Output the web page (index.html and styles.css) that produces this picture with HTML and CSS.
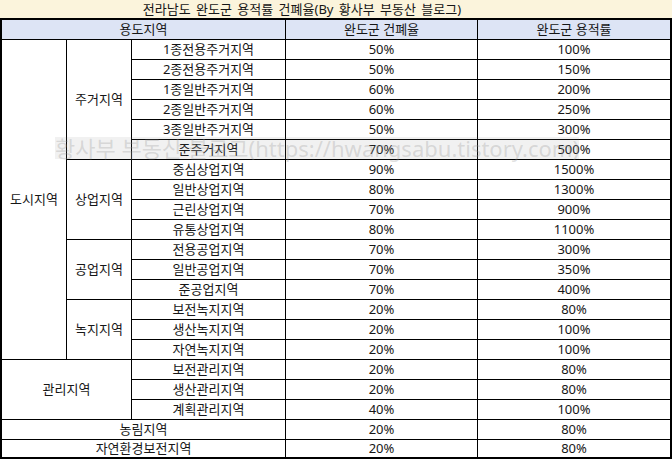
FILE: index.html
```html
<!DOCTYPE html>
<html lang="ko">
<head>
<meta charset="utf-8">
<title>전라남도 완도군 용적률 건폐율</title>
<link rel="stylesheet" href="styles.css">
</head>
<body>
<div class="page">
  <div class="title">전라남도 완도군 용적률 건폐율(By 황사부 부동산 블로그)</div>
  <div class="frame">
    <div class="grid">
      <div class="cell head c3">용도지역</div>
      <div class="cell head">완도군 건폐율</div>
      <div class="cell head">완도군 용적률</div>

      <div class="cell r16">도시지역</div>
      <div class="cell r6">주거지역</div>
      <div class="cell">1종전용주거지역</div><div class="cell">50%</div><div class="cell">100%</div>
      <div class="cell">2종전용주거지역</div><div class="cell">50%</div><div class="cell">150%</div>
      <div class="cell">1종일반주거지역</div><div class="cell">60%</div><div class="cell">200%</div>
      <div class="cell">2종일반주거지역</div><div class="cell">60%</div><div class="cell">250%</div>
      <div class="cell">3종일반주거지역</div><div class="cell">50%</div><div class="cell">300%</div>
      <div class="cell">준주거지역</div><div class="cell">70%</div><div class="cell">500%</div>

      <div class="cell r4">상업지역</div>
      <div class="cell">중심상업지역</div><div class="cell">90%</div><div class="cell">1500%</div>
      <div class="cell">일반상업지역</div><div class="cell">80%</div><div class="cell">1300%</div>
      <div class="cell">근린상업지역</div><div class="cell">70%</div><div class="cell">900%</div>
      <div class="cell">유통상업지역</div><div class="cell">80%</div><div class="cell">1100%</div>

      <div class="cell r3">공업지역</div>
      <div class="cell">전용공업지역</div><div class="cell">70%</div><div class="cell">300%</div>
      <div class="cell">일반공업지역</div><div class="cell">70%</div><div class="cell">350%</div>
      <div class="cell">준공업지역</div><div class="cell">70%</div><div class="cell">400%</div>

      <div class="cell r3">녹지지역</div>
      <div class="cell">보전녹지지역</div><div class="cell">20%</div><div class="cell">80%</div>
      <div class="cell">생산녹지지역</div><div class="cell">20%</div><div class="cell">100%</div>
      <div class="cell">자연녹지지역</div><div class="cell">20%</div><div class="cell">100%</div>

      <div class="cell r3 c2">관리지역</div>
      <div class="cell">보전관리지역</div><div class="cell">20%</div><div class="cell">80%</div>
      <div class="cell">생산관리지역</div><div class="cell">20%</div><div class="cell">80%</div>
      <div class="cell">계획관리지역</div><div class="cell">40%</div><div class="cell">100%</div>

      <div class="cell c3">농림지역</div><div class="cell">20%</div><div class="cell">80%</div>
      <div class="cell c3">자연환경보전지역</div><div class="cell">20%</div><div class="cell">80%</div>
    </div>
  </div>
  <div class="watermark">황사부 부동산 블로그(https://hwangsabu.tistory.com)</div>
</div>
</body>
</html>
```
FILE: styles.css
```css
html, body {
  margin: 0;
  padding: 0;
  background: #ffffff;
}
body {
  font-family: "Noto Sans", "Noto Sans CJK KR", sans-serif;
  font-size: 13px;
  color: #161616;
}
.page {
  position: relative;
  width: 672px;
  height: 460px;
  overflow: hidden;
}
.title {
  height: 18px;
  line-height: 18px;
  background: #fbf4dc;
  text-align: center;
  word-spacing: 2px;
  white-space: nowrap;
  padding-right: 68px;
}
.frame {
  background: #000;
  padding: 2px;
  width: 668px;
}
.grid {
  display: grid;
  grid-template-columns: 64px 64px 153px 191px 192px;
  grid-template-rows: repeat(21, 19px) 17px;
  gap: 1px;
  background: #000;
}
.cell {
  background: #fff;
  display: flex;
  align-items: center;
  justify-content: center;
  white-space: nowrap;
  line-height: 1;
}
.head {
  background: #dde4f5;
}
.c2 { grid-column: span 2; }
.c3 { grid-column: span 3; }
.r3 { grid-row: span 3; }
.r4 { grid-row: span 4; }
.r6 { grid-row: span 6; }
.r16 { grid-row: span 16; }
.watermark {
  position: absolute;
  left: 55px;
  top: 137px;
  height: 22px;
  line-height: 22px;
  font-size: 22px;
  color: rgba(150, 150, 150, 0.3);
  background: rgba(120, 120, 120, 0.1);
  white-space: nowrap;
}
```
